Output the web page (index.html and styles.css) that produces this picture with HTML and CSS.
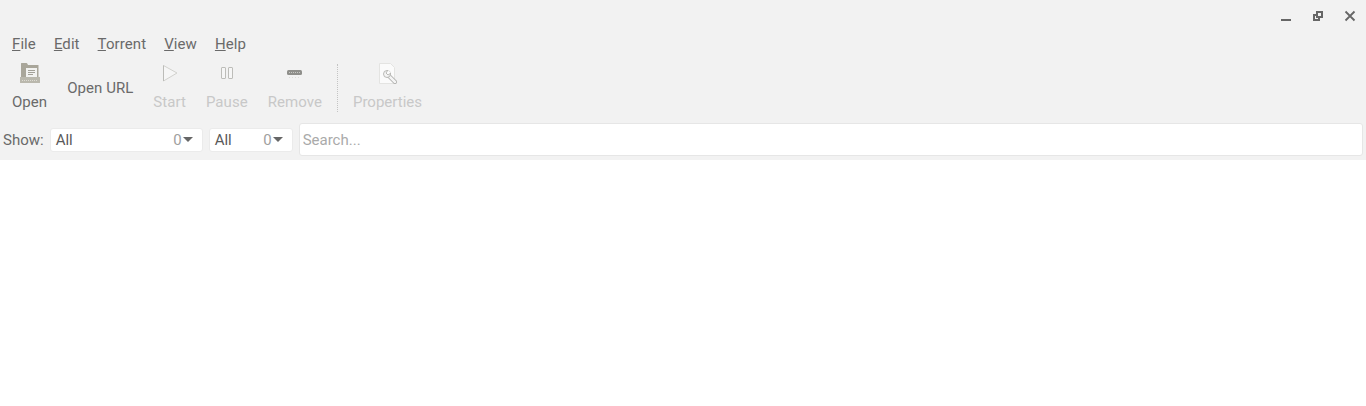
FILE: index.html
```html
<!DOCTYPE html>
<html lang="en">
<head>
    <meta charset="UTF-8">
    <title>Transmission</title>
    <link rel="stylesheet" href="styles.css">
</head>
<body>
    <header class="window-top">
        <div class="titlebar">
            <button class="win-button" aria-label="Minimize">
                <svg width="12" height="12" viewBox="0 0 12 12"><rect x="1" y="9" width="10" height="2" fill="#666"/></svg>
            </button>
            <button class="win-button" aria-label="Restore">
                <svg width="12" height="12" viewBox="0 0 12 12"><path d="M4 1h7v7H8v3H1V4h3zM6 3v3h3V3zM3 6v3h3V8H4V6z" fill="#666" fill-rule="evenodd"/></svg>
            </button>
            <button class="win-button" aria-label="Close">
                <svg width="12" height="12" viewBox="0 0 12 12"><path d="M1.500 1.500l9 9M10.500 1.500l-9 9" stroke="#666" stroke-width="1.800" fill="none"/></svg>
            </button>
        </div>

        <nav class="menubar">
            <span class="menu-item"><u>F</u>ile</span>
            <span class="menu-item"><u>E</u>dit</span>
            <span class="menu-item"><u>T</u>orrent</span>
            <span class="menu-item"><u>V</u>iew</span>
            <span class="menu-item"><u>H</u>elp</span>
        </nav>

        <div class="toolbar">
            <div class="tool tool-open">
                <svg class="tool-icon" width="24" height="24" viewBox="0 0 24 24">
                    <path d="M3 2.500q0-.5.500-.5h5q.5 0 1 1l.5 1h10.500v13H3z" fill="#a9a69a"/>
                    <rect x="8" y="7" width="11" height="9" fill="#f2f2f0"/>
                    <path d="M10 9.500h7M10 11.500h7M10 13.500h5" stroke="#a3a198" stroke-width="1"/>
                    <path d="M2 16h20v5.500q0 .5-.5.500H2.500q-.5 0-.5-.5z" fill="#bab8ad"/>
                    <path d="M4 19.500h16" stroke="#dedcd4" stroke-width="1" stroke-dasharray="1 1"/>
                </svg>
                <span>Open</span>
            </div>
            <div class="tool tool-url"><span>Open URL</span></div>
            <div class="tool tool-start is-disabled">
                <svg class="tool-icon" width="24" height="24" viewBox="0 0 24 24">
                    <path d="M5.500 4.500L19 12 5.500 20z" fill="#f6f6f6" stroke="#d2d2ce" stroke-width="1"/>
                    <path d="M5.500 4.500V20" stroke="#bcbcb8" stroke-width="1"/>
                </svg>
                <span>Start</span>
            </div>
            <div class="tool tool-pause is-disabled">
                <svg class="tool-icon" width="24" height="24" viewBox="0 0 24 24">
                    <rect x="6.500" y="6.500" width="4" height="11" rx="0.500" fill="#f6f6f6" stroke="#bdbdb9"/>
                    <rect x="13.500" y="6.500" width="4" height="11" rx="0.500" fill="#f6f6f6" stroke="#bdbdb9"/>
                </svg>
                <span>Pause</span>
            </div>
            <div class="tool tool-remove is-disabled">
                <svg class="tool-icon" width="24" height="24" viewBox="0 0 24 24">
                    <rect x="4" y="9" width="15" height="5" rx="1.500" fill="#8f8f8b"/>
                    <path d="M6 11.500h11" stroke="#c8c8c4" stroke-dasharray="1 1"/>
                    <path d="M6 16.500h11" stroke="#dcdcd8" stroke-dasharray="1 2"/>
                </svg>
                <span>Remove</span>
            </div>
            <div class="tool-divider"></div>
            <div class="tool tool-props is-disabled">
                <svg class="tool-icon" width="24" height="24" viewBox="0 0 24 24">
                    <path d="M4.500 2.500h11l4 4v16h-15z" fill="#fbfbfb" stroke="#e4e4e2"/>
                    <path d="M13 14l7 7" stroke="#a9a9a6" stroke-width="4" stroke-linecap="round"/>
                    <path d="M13 14l7 7" stroke="#f4f4f4" stroke-width="2.500" stroke-linecap="round"/>
                    <circle cx="12" cy="13" r="3.500" fill="#f4f4f4" stroke="#a9a9a6" stroke-width="0.800"/>
                    <path d="M13 9l-2 3 2 2 3-2" fill="#fbfbfb" stroke="#a9a9a6" stroke-width="0.800"/>
                </svg>
                <span>Properties</span>
            </div>
        </div>

        <div class="filterbar">
            <span class="filter-label">Show:</span>
            <div class="combo combo-activity">
                <span>All</span>
                <span class="combo-count">0</span>
                <span class="combo-arrow"></span>
            </div>
            <div class="combo combo-tracker">
                <span>All</span>
                <span class="combo-count">0</span>
                <span class="combo-arrow"></span>
            </div>
            <input class="search" type="text" placeholder="Search...">
        </div>
    </header>

    <main class="torrent-list"></main>
</body>
</html>
```

FILE: styles.css
```css
html, body {
    height: 100%;
}

body {
    margin: 0;
    display: flex;
    flex-direction: column;
    overflow: hidden;
    background-color: #fff;
    color: #6a6a6a;
    font-family: Roboto, "Liberation Sans", sans-serif;
    font-size: 15px;
}

.window-top {
    background-color: #f2f2f2;
    height: 160px;
    display: flex;
    flex-direction: column;
}

.titlebar {
    display: flex;
    justify-content: flex-end;
    align-items: center;
    height: 32px;
}

.win-button {
    width: 32px;
    height: 32px;
    padding: 0;
    border: none;
    background: none;
    display: flex;
    align-items: center;
    justify-content: center;
}

.menubar {
    display: flex;
    height: 24px;
    align-items: center;
    padding-left: 3px;
}

.menu-item {
    padding: 0 9px;
    letter-spacing: 0.08px;
}

.toolbar {
    display: flex;
    height: 60px;
    margin-top: 3px;
    padding-left: 2px;
}

/* Icon on top, label below; Open URL has no icon so it sits in the middle */
.tool {
    display: flex;
    flex-direction: column;
    align-items: center;
    gap: 9px;
    padding: 2px 10px 0;
    line-height: 17px;
    letter-spacing: 0.05px;
}

.tool-icon {
    display: block;
}

.tool-url {
    justify-content: center;
    padding-top: 0;
    padding-bottom: 1px;
}

.is-disabled {
    color: #c8c8c8;
}

.tool-divider {
    height: 48px;
    margin: 5px 5px 0 5px;
    border-left: 1px dotted #c4c4c4;
}

.tool-props {
    letter-spacing: 0;
}

.filterbar {
    display: flex;
    align-items: center;
    gap: 6px;
    height: 33px;
    margin-top: 4px;
    padding: 0 3px;
}

.combo {
    display: flex;
    align-items: center;
    height: 24px;
    padding: 0 9px 0 5px;
    box-sizing: border-box;
    border: 1px solid #ebebeb;
    border-radius: 3px;
    background-color: #fff;
    color: #5a5a5a;
}

.combo-activity {
    width: 153px;
}

.combo-tracker {
    width: 84px;
}

.combo-count {
    margin-left: auto;
    color: #a0a0a0;
}

.combo-arrow {
    width: 0;
    height: 0;
    margin-left: 1px;
    border-left: 5px solid transparent;
    border-right: 5px solid transparent;
    border-top: 5px solid #666;
}

.search {
    flex: 1;
    height: 33px;
    min-width: 0;
    box-sizing: border-box;
    padding: 0 3px;
    border: 1px solid #e6e6e6;
    border-radius: 3px;
    background-color: #fff;
    font: inherit;
    outline: none;
}

.search::placeholder {
    color: #aaa;
    opacity: 1;
}

.torrent-list {
    flex: 1;
    background-color: #fff;
}
```
